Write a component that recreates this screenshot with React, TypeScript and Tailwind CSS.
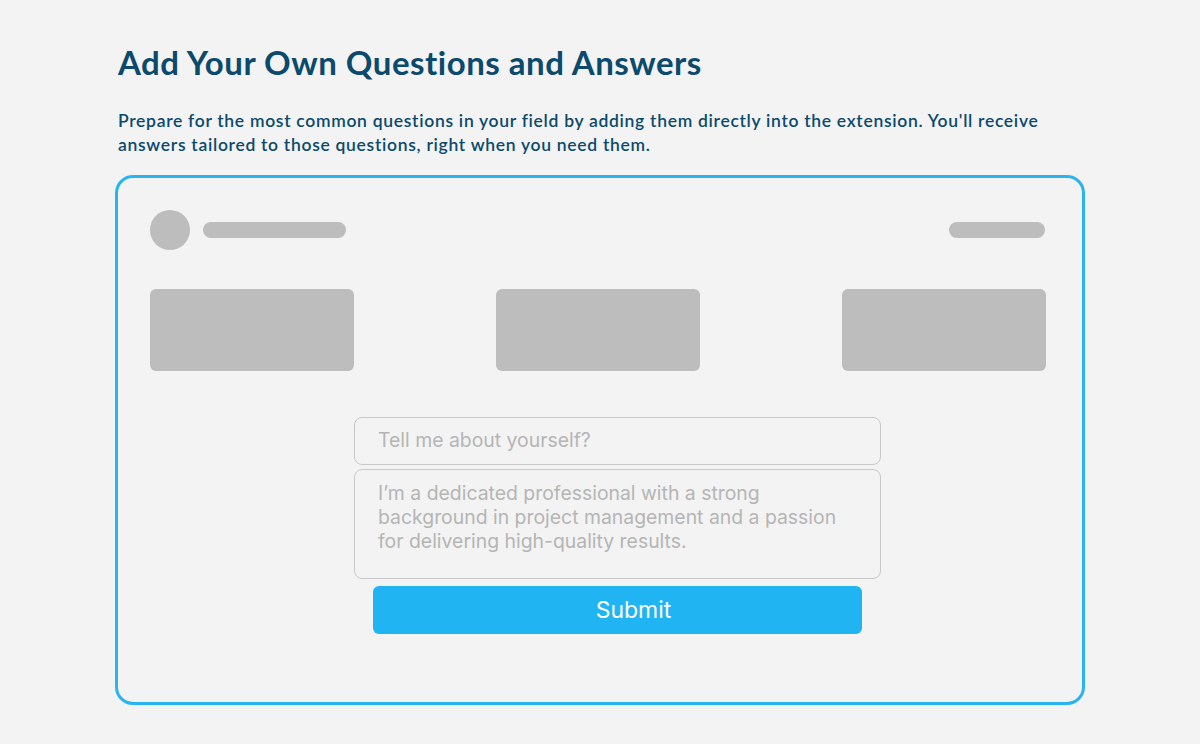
import React from "react";

export default function App() {
  return (
    <div className="w-[1200px] h-[744px] bg-[#f3f3f3] overflow-hidden" style={{ fontFamily: "Inter, 'Noto Sans', sans-serif" }}>
      <div className="pl-[118px] pt-[42px]">
        <h1
          className="text-[33px] leading-[40px] font-bold tracking-[0.5px] text-[#0b4a6c]"
          style={{ fontFamily: "Lato, 'Open Sans', sans-serif" }}
        >
          Add Your Own Questions and Answers
        </h1>
        <p
          className="mt-[27px] w-[940px] text-[17.5px] leading-[24px] font-semibold tracking-[0.7px] text-[#0b4a6c]"
          style={{ fontFamily: "Lato, 'Open Sans', sans-serif" }}
        >
          Prepare for the most common questions in your field by adding them directly into the extension. You'll receive answers tailored to those questions, right when you need them.
        </p>
      </div>
      <div className="ml-[115px] mt-[18px] w-[970px] h-[530px] rounded-[18px] border-[3px] border-[#2ab4ef] pl-[32px] pr-[36px] pt-[32px]">
        <div className="flex items-center justify-between">
          <div className="flex items-center gap-[13px]">
            <div className="w-[40px] h-[40px] rounded-full bg-[#bdbdbd]" />
            <div className="w-[143px] h-[16px] rounded-full bg-[#bdbdbd]" />
          </div>
          <div className="w-[96px] h-[16px] rounded-full bg-[#bdbdbd] mr-[1px]" />
        </div>
        <div className="mt-[39px] flex justify-between">
          <div className="w-[204px] h-[82px] rounded-[6px] bg-[#bdbdbd]" />
          <div className="w-[204px] h-[82px] rounded-[6px] bg-[#bdbdbd]" />
          <div className="w-[204px] h-[82px] rounded-[6px] bg-[#bdbdbd]" />
        </div>
        <div className="ml-[204px] mt-[46px] w-[527px] flex flex-col">
          <div className="h-[48px] rounded-[8px] border border-[#c9c9c9] flex items-center pl-[23px] text-[19.4px] text-[#b5b5b5]">
            Tell me about yourself?
          </div>
          <div className="mt-[4px] h-[110px] rounded-[8px] border border-[#c9c9c9] pl-[23px] pr-[36px] pt-[11px] text-[19.4px] leading-[24px] text-[#b5b5b5]">
            I’m a dedicated professional with a strong background in project management and a passion for delivering high-quality results.
          </div>
          <div className="mt-[7px] mx-[19px] h-[48px] rounded-[6px] bg-[#20b5f2] flex items-center justify-center pl-[32px] text-[23px] text-white">
            Submit
          </div>
        </div>
      </div>
    </div>
  );
}
